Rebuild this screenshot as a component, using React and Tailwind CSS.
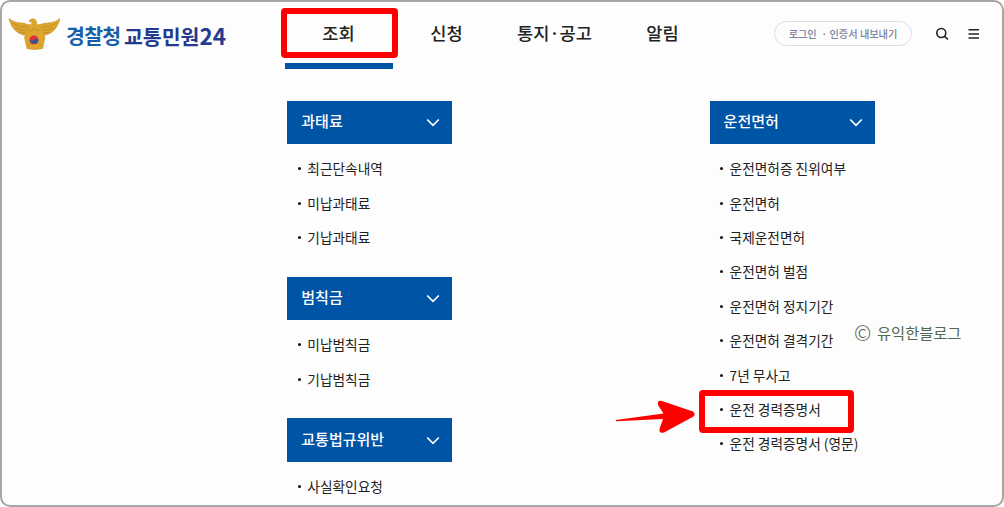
import React from "react";

const NAV = ["조회", "신청", "통지·공고", "알림"];

const LEFT = [
  { title: "과태료", items: ["최근단속내역", "미납과태료", "기납과태료"] },
  { title: "범칙금", items: ["미납범칙금", "기납범칙금"] },
  { title: "교통법규위반", items: ["사실확인요청"] },
];

const RIGHT = [
  {
    title: "운전면허",
    items: [
      "운전면허증 진위여부",
      "운전면허",
      "국제운전면허",
      "운전면허 벌점",
      "운전면허 정지기간",
      "운전면허 결격기간",
      "7년 무사고",
      "운전 경력증명서",
      "운전 경력증명서 (영문)",
    ],
  },
];

const App = () => {
  return (
    <div className="relative w-[1004px] h-[507px] overflow-hidden rounded-[10px] border-2 border-[#a6a6a6] bg-[#fdfdfd] font-['Noto_Sans_CJK_KR',sans-serif] text-[#222]">

      {/* HEADER */}
      <header className="flex h-[67px]">
        <div className="flex w-[282.5px] items-start pl-[6px] pt-[15px]">
          <Emblem />
          <p className="ml-[5px] mt-[3px] flex whitespace-nowrap text-[20.500px] leading-[30px] font-bold">
            <span className="w-[58px] tracking-[-0.7px] text-[#1560a8]">경찰청</span>
            <span className="text-[#233a8e]">
              교통민원<span className="text-[22.500px]">24</span>
            </span>
          </p>
        </div>

        <nav className="grid grid-cols-[repeat(4,108px)]">
          {NAV.map((name, i) => (
            <a
              key={name}
              className={
                i === 0
                  ? "border-b-[6px] border-[#0054a6] pt-[17px] text-center text-[17.600px] leading-[28px] font-medium"
                  : "pt-[17px] text-center text-[17.600px] leading-[28px] font-medium"
              }
            >
              {name}
            </a>
          ))}
        </nav>

        <div className="ml-[57.500px] mt-[19px] flex h-[25px] w-[138px] items-center justify-center rounded-full border border-[#dcdcec] text-[10.200px] whitespace-pre font-medium text-[#7b819c]">
          로그인  · 인증서 내보내기
        </div>
        <SearchIcon />
        <MenuIcon />
      </header>

      {/* MENU COLUMNS */}
      <div className="flex gap-[257.300px] pl-[285.300px] pt-[31.5px]">
        <Column sections={LEFT} />
        <Column sections={RIGHT} />
      </div>

      {/* MARKS */}
      <div className="absolute left-[279px] top-[6px] h-[50px] w-[117px] rounded-[4px] border-[6px] border-[#fe0000]" />
      <div className="absolute left-[697px] top-[388px] h-[43px] w-[155px] rounded-[4px] border-[6px] border-[#fe0000]" />
      <svg className="absolute left-[612px] top-[396px]" width="84" height="40" viewBox="614 398 84 40">
        <path
          d="M616 420 L663.500 413.500 L658 405 Q657 400 662 401 L693 411.500 Q696 414 693.500 416.500 L664 432.500 Q659 434 659.500 429 L663 419 L616 421.200 Z"
          fill="#fe0000"
        />
      </svg>
      <p className="absolute left-[852px] top-[318px] flex items-center whitespace-nowrap text-[15.300px] leading-[24px] text-[#52684f]">
        <span className="w-[23px] text-[21px] font-light">©</span>
        <span className="-mt-px">유익한블로그</span>
      </p>
    </div>
  );
};

const Column = ({ sections }) => (
  <div className="w-[165px]">
    {sections.map((s) => (
      <section key={s.title} className="mb-[21px]">
        <h2 className="flex h-[43.500px] items-center justify-between bg-[#0054a6] pl-[14px] pr-[12px] text-[15px] font-medium text-white">
          <span className="-mt-[2px]">{s.title}</span>
          <svg width="14" height="9" viewBox="0 0 14 9" fill="none" stroke="#fff" strokeWidth="1.700">
            <path d="M1.200 1.500 L7 7.300 L12.800 1.500" />
          </svg>
        </h2>
        <ul className="pt-[8.500px]">
          {s.items.map((item) => (
            <li key={item} className="flex h-[34.400px] items-center whitespace-nowrap pl-[10.500px] text-[13.700px]">
              <span className="mr-[6.500px] -mt-[2px] size-[3px] rounded-full bg-[#111]" />
              <span className="-mt-[2.500px]">{item}</span>
            </li>
          ))}
        </ul>
      </section>
    ))}
  </div>
);

const Emblem = () => (
  <svg width="53" height="33" viewBox="0 0 53 33">
    <path
      d="M1 1.500 C7 7 14 5 20 7.500 L23.500 8 L24 5 L21 4.500 Q22 2 25 1.800 Q29 2 28.800 8 L32 7.500 C39 5 46 7 52 1.500 C50 10 45 17 35.500 18.500 L37 20 L34.500 31.500 Q26.500 33.500 19 31.500 L16.500 20 L18 18.500 C8 17 3 10 1 1.500 Z"
      fill="#dda62d"
      stroke="#c58b20"
      strokeWidth="0.600"
    />
    <path
      d="M4 6 Q11 11 20 10 M7 11 Q13 14 19 13 M11 15 L18 16 M49 6 Q42 11 33 10 M46 11 Q40 14 34 13 M42 15 L35 16 M20 11 L23 14 L26.500 11 L30 14 L33 11 M20 29 L22 26 M33 29 L31 26"
      fill="none"
      stroke="#b98222"
      strokeWidth="0.700"
    />
    <circle cx="26" cy="23" r="4.500" fill="#e0303e" />
    <path d="M21.600 22 Q23.500 25.500 26 23 Q28.500 21 30.500 23 A4.500 4.500 0 0 1 21.600 22 Z" fill="#1c5aa8" />
  </svg>
);

const SearchIcon = () => (
  <svg className="ml-[22.500px] mt-[25px]" width="14" height="14" viewBox="0 0 14 14" fill="none" stroke="#222" strokeWidth="1.600">
    <circle cx="6.300" cy="6" r="4.500" />
    <path d="M9.500 9.300 L13 12.500" />
  </svg>
);

const MenuIcon = () => (
  <svg className="ml-[19px] mt-[26px]" width="12" height="12" viewBox="0 0 12 12" stroke="#222" strokeWidth="1.500">
    <path d="M0.500 1.700 H11 M0.500 5.900 H11 M0.500 10.100 H11" />
  </svg>
);

export default App;
